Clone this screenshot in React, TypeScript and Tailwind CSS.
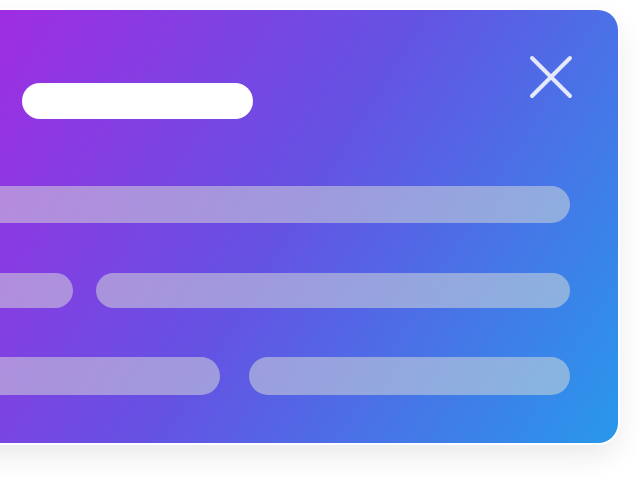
import React from "react";

export default function App() {
  return (
    <div className="w-[640px] h-[479px] overflow-hidden bg-white pt-[10px]">
      <div className="ml-[-60px] w-[678px] h-[433px] rounded-[20px] bg-linear-[122deg] from-[#a22be2] from-[4%] via-[#6552e3] via-[50%] to-[#2898eb] ring-2 ring-white shadow-[0_12px_30px_rgba(0,0,0,0.09)] pt-[45px] pr-[45px] pl-[20px] flex flex-col">
        <div className="flex justify-between h-[44px]">
          <div className="ml-[62px] mt-[28px] w-[231px] h-[36px] rounded-full bg-white" />
          <svg width="44" height="44" viewBox="0 0 44 44" className="shrink-0">
            <path d="M3 3 L41 41 M41 3 L3 41" stroke="rgba(255,255,255,0.85)" strokeWidth="4" strokeLinecap="round" fill="none" />
          </svg>
        </div>
        <div className="mr-[3px] flex flex-col">
          <div className="mt-[87px] h-[37px] rounded-full bg-[#dcdfd8]/50" />
          <div className="mt-[50px] flex gap-[23px]">
            <div className="w-[113px] h-[35px] rounded-full bg-[#dcdfd8]/50" />
            <div className="flex-1 h-[35px] rounded-full bg-[#dcdfd8]/50" />
          </div>
          <div className="mt-[49px] flex gap-[29px]">
            <div className="w-[260px] h-[38px] rounded-full bg-[#dcdfd8]/50" />
            <div className="flex-1 h-[38px] rounded-full bg-[#dcdfd8]/50" />
          </div>
        </div>
      </div>
    </div>
  );
}
